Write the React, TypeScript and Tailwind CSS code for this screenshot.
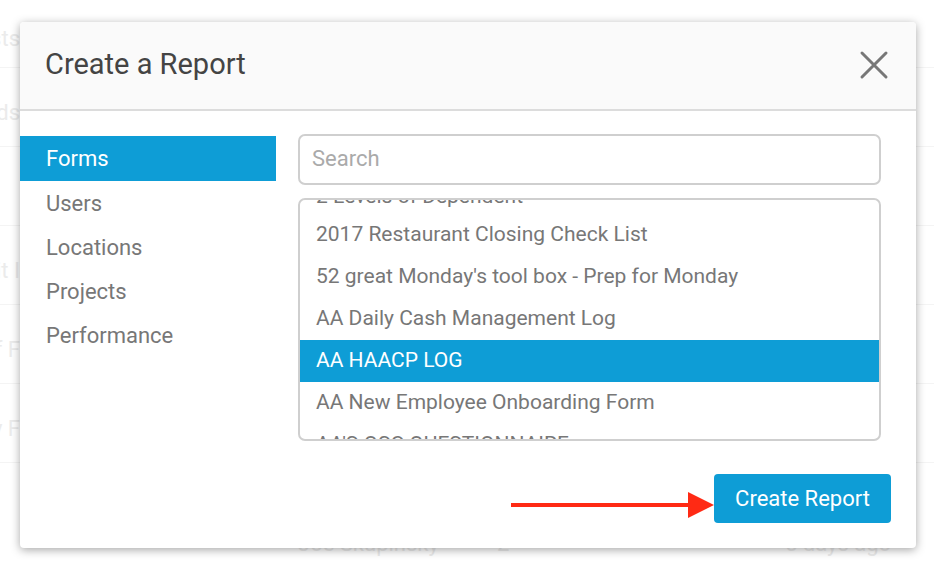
import React from 'react';

const sections = ['Forms', 'Users', 'Locations', 'Projects', 'Performance'];

const forms = [
  '2 Levels of Dependent',
  '2017 Restaurant Closing Check List',
  "52 great Monday's tool box - Prep for Monday",
  'AA Daily Cash Management Log',
  'AA HAACP LOG',
  'AA New Employee Onboarding Form',
  "AA'S OSC QUESTIONNAIRE",
];

// faded page that sits behind the dialog
const bgRows = [
  { left: 'Checklists' },
  { left: 'Forms and Fields' },
  { left: '' },
  { left: 'Audit I' },
  { left: 'Walk-through of F' },
  { left: 'Safety F' },
];

const App = () => {
  const selectedSection = 'Forms';
  const selectedForm = 'AA HAACP LOG';

  return (
    <div
      className="relative w-[934px] h-[570px] overflow-hidden bg-white"
      style={{ fontFamily: 'Roboto, "Liberation Sans", sans-serif' }}
    >
      {/* background page */}
      <div className="flex flex-col">
        {bgRows.map((r, i) => (
          <div
            key={i}
            className="flex items-center h-[79px] first:h-[68px] border-b border-[#f4f4f4] text-[22px] text-[#ebebeb]"
          >
            <div className="w-[260px] -ml-[240px] whitespace-nowrap text-right translate-y-[5px]">{r.left}</div>
          </div>
        ))}
        <div className="flex h-[110px] pt-[64px] text-[22px] text-[#ebebeb]">
          <div className="w-[298px] shrink-0" />
          <div className="w-[199px] shrink-0 whitespace-nowrap">Joe Skupinsky</div>
          <div className="w-[288px] shrink-0">2</div>
          <div className="whitespace-nowrap">5 days ago</div>
        </div>
      </div>

      {/* dialog */}
      <div className="absolute left-[20px] top-[22px] w-[896px] h-[526px] flex flex-col bg-white rounded-[4px] shadow-[0_2px_10px_rgba(0,0,0,0.35)] overflow-hidden">
        <div className="flex items-center justify-between h-[89px] shrink-0 bg-[#fafafa] border-b-2 border-[#dcdcdc] pl-[25px] pr-[27px]">
          <h2 className="text-[29px] text-[#444] leading-none -mt-[2px]">Create a Report</h2>
          <svg width="30" height="30" viewBox="0 0 30 30" className="-mt-[2px]">
            <path d="M3 3 L27 27 M27 3 L3 27" stroke="#777" strokeWidth="3" strokeLinecap="round" />
          </svg>
        </div>

        <div className="flex pt-[23px]">
          <ul className="w-[256px] shrink-0 pt-[2px]">
            {sections.map((s) =>
              s === selectedSection ? (
                <li key={s} className="flex items-center h-[45px] pl-[26px] text-[22px] bg-[#0e9dd6] text-white">
                  {s}
                </li>
              ) : (
                <li key={s} className="flex items-center h-[44px] pl-[26px] text-[22px] text-[#777]">
                  {s}
                </li>
              )
            )}
          </ul>

          <div className="flex flex-col flex-1 ml-[22px] mr-[35px]">
            <div className="flex items-center h-[51px] border-2 border-[#cfcfcf] rounded-[7px] px-[12px] text-[22px] text-[#aaa]">
              <span className="-mt-[2px]">Search</span>
            </div>

            <div className="mt-[13px] h-[243px] border-2 border-[#cfcfcf] rounded-[7px] overflow-hidden">
              <div className="-mt-[28px]">
                {forms.map((f, i) => (
                  <div
                    key={f}
                    className={
                      f === selectedForm
                        ? 'flex items-center h-[42px] px-[16px] text-[21px] bg-[#0e9dd6] text-white whitespace-nowrap'
                        : i === 0
                        ? 'flex items-center h-[42px] px-[16px] pt-[8px] text-[21px] text-[#777] whitespace-nowrap'
                        : 'flex items-center h-[42px] px-[16px] text-[21px] text-[#777] whitespace-nowrap'
                    }
                  >
                    {f}
                  </div>
                ))}
              </div>
            </div>
          </div>
        </div>

        <div className="flex items-center justify-end pt-[33px] pr-[25px]">
          <svg width="203" height="28" viewBox="0 0 203 28" className="mt-[12px]">
            <line x1="0" y1="14" x2="180" y2="14" stroke="#ff2a14" strokeWidth="4" />
            <polygon points="177,1 203,14 177,27" fill="#ff2a14" />
          </svg>
          <button className="h-[49px] w-[177px] rounded-[4px] bg-[#0e9dd6] text-white text-[22px]">
            Create Report
          </button>
        </div>
      </div>
    </div>
  );
};

export default App;
